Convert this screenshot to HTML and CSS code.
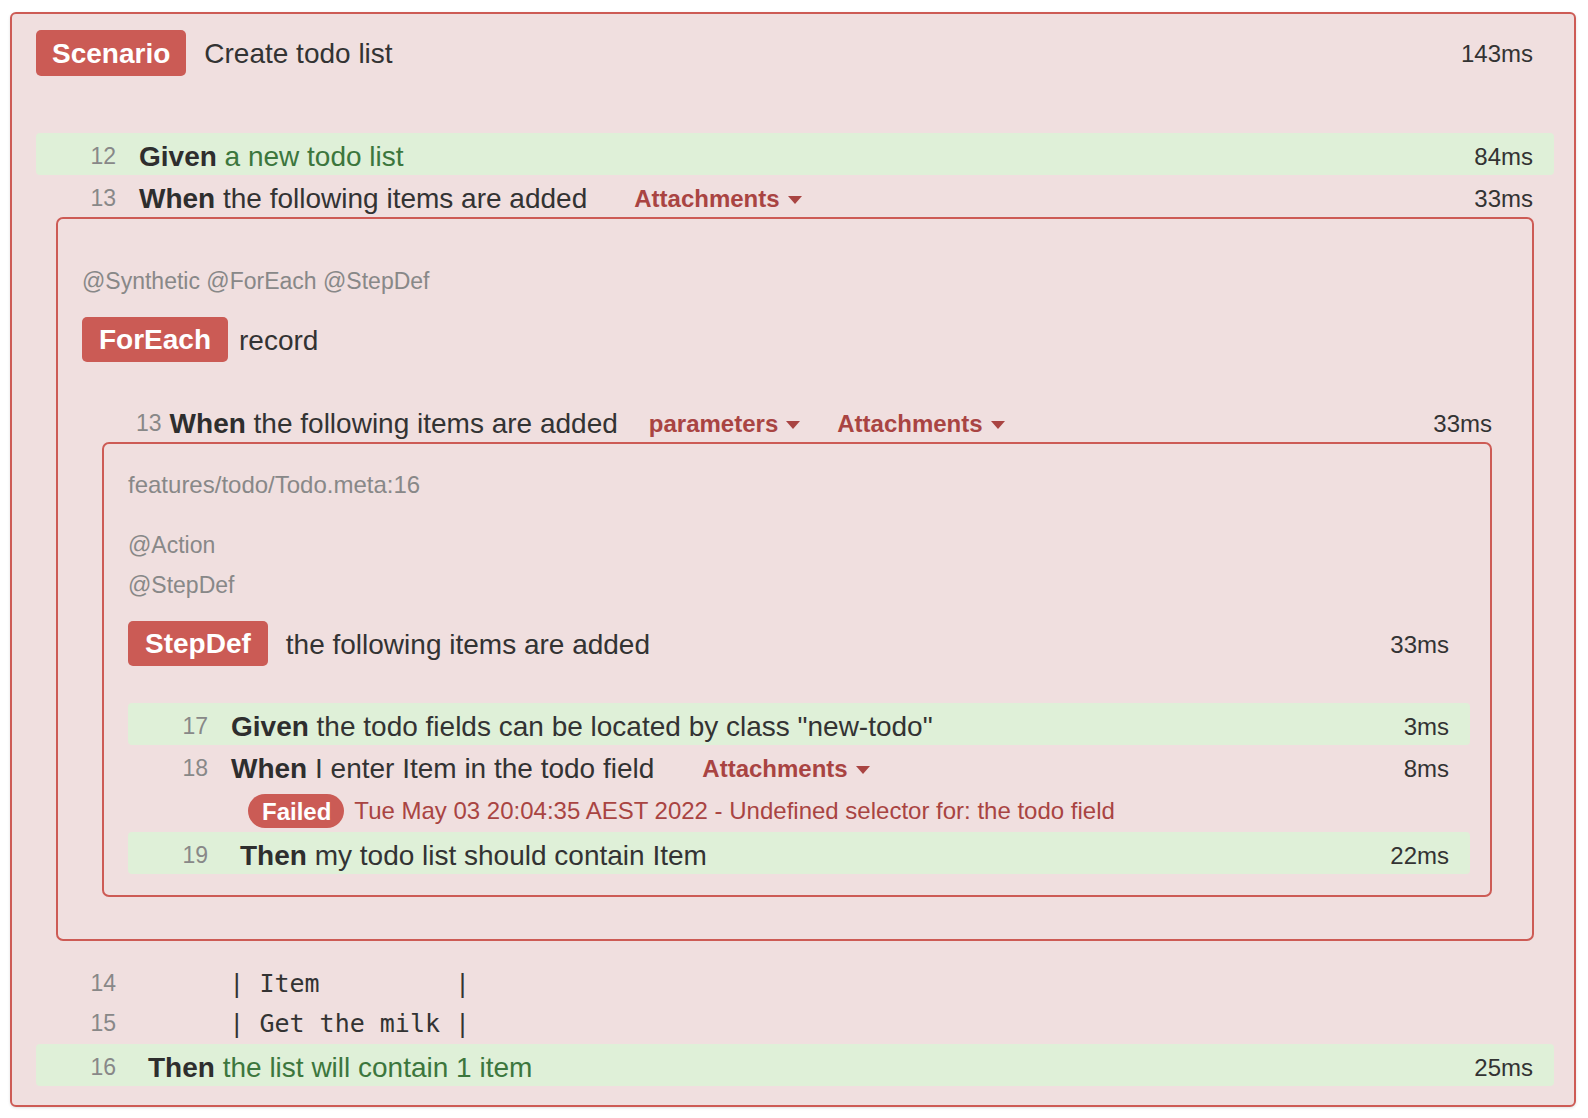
FILE: index.html
```html
<!DOCTYPE html>
<html>
<head>
<meta charset="utf-8">
<link rel="stylesheet" href="styles.css">
</head>
<body>
<div class="page">
  <div class="scenario">
    <div class="head">
      <span class="badge big">Scenario</span>
      <span class="title">Create todo list</span>
      <span class="time">143ms</span>
    </div>
    <div class="steps">
      <div class="step ok"><span class="ln">12</span><span class="txt"><b class="kw">Given</b> <span class="green">a new todo list</span></span><span class="time">84ms</span></div>
      <div class="step"><span class="ln">13</span><span class="txt"><b class="kw">When</b> the following items are added</span><span class="drop">Attachments</span><span class="time">33ms</span></div>
      <div class="box box-outer">
        <div class="tags">@Synthetic @ForEach @StepDef</div>
        <div class="bhead"><span class="badge">ForEach</span><span class="name near">record</span></div>
        <div class="step child"><span class="ln inl">13</span><span class="txt"><b class="kw">When</b> the following items are added</span><span class="drop near">parameters</span><span class="drop next">Attachments</span><span class="time">33ms</span></div>
        <div class="box box-inner">
          <div class="path">features/todo/Todo.meta:16</div>
          <div class="tag tag-first">@Action</div>
          <div class="tag">@StepDef</div>
          <div class="bhead bhead-step"><span class="badge">StepDef</span><span class="name">the following items are added</span><span class="time">33ms</span></div>
          <div class="step ok first"><span class="ln">17</span><span class="txt"><b class="kw">Given</b> the todo fields can be located by class "new-todo"</span><span class="time">3ms</span></div>
          <div class="step"><span class="ln">18</span><span class="txt"><b class="kw">When</b> I enter Item in the todo field</span><span class="drop wide">Attachments</span><span class="time">8ms</span></div>
          <div class="fail"><span class="pill">Failed</span><span class="err">Tue May 03 20:04:35 AEST 2022 - Undefined selector for: the todo field</span></div>
          <div class="step ok"><span class="ln">19</span><span class="txt"><b class="kw shift">Then</b> my todo list should contain Item</span><span class="time">22ms</span></div>
        </div>
      </div>
      <div class="step table first-table"><span class="ln">14</span><span class="mono">      | Item         |</span></div>
      <div class="step table"><span class="ln">15</span><span class="mono">      | Get the milk |</span></div>
      <div class="step ok"><span class="ln">16</span><span class="txt"><b class="kw shift">Then</b> <span class="green">the list will contain 1 item</span></span><span class="time">25ms</span></div>
    </div>
  </div>
</div>
</body>
</html>
```

FILE: styles.css
```css
* {
  box-sizing: border-box;
}

html,
body {
  margin: 0;
  background: #ffffff;
}

body {
  font-family: "Liberation Sans", Arial, Helvetica, sans-serif;
  color: #333333;
}

.page {
  padding: 12px 12px 11px 10px;
}

.scenario {
  border: 2px solid #cd5b55;
  border-radius: 6px;
  background: #f0dfdf;
  padding: 16px 20px 19px 24px;
  box-shadow: 0 1px 3px rgba(0, 0, 0, 0.12);
}

.head {
  display: flex;
  align-items: center;
  height: 46px;
  padding-right: 21px;
  padding-top: 2px;
}

.badge {
  display: inline-block;
  flex: none;
  align-self: flex-start;
  background: #cb5b55;
  color: #ffffff;
  font-weight: bold;
  font-size: 28px;
  border-radius: 5px;
  padding: 0 17px;
  height: 45px;
  line-height: 46px;
}

.head .badge {
  margin-top: -2px;
}

.badge.big {
  height: 46px;
  line-height: 47px;
  padding: 0 16px;
}

.title {
  font-size: 28px;
  margin-left: 18px;
}

.time {
  margin-left: auto;
  font-size: 24px;
  color: #333333;
}

.steps {
  margin-top: 57px;
}

.step {
  display: flex;
  align-items: center;
  height: 42px;
  padding: 5px 21px 0 52px;
  font-size: 28px;
  border-radius: 4px;
}

.step.ok {
  background: #dff0d8;
}

.txt {
  white-space: pre;
}

.ln {
  flex: none;
  width: 28px;
  margin-right: 23px;
  text-align: right;
  font-size: 23px;
  color: #888888;
}

.ln.inl {
  width: auto;
  margin-right: 8px;
}

.kw {
  font-weight: bold;
  color: #2e2e2e;
}

.kw.shift {
  margin-left: 9px;
}

.green {
  color: #3c763d;
}

.drop {
  display: inline-flex;
  align-items: center;
  margin-left: 47px;
  color: #a94442;
  font-weight: bold;
  font-size: 24px;
}

.drop.wide {
  margin-left: 48px;
}

.drop.near {
  margin-left: 31px;
}

.drop.next {
  margin-left: 37px;
}

.drop::after {
  content: "";
  margin-left: 8px;
  margin-top: 2px;
  border-left: 7px solid transparent;
  border-right: 7px solid transparent;
  border-top: 8px solid currentColor;
}

.box {
  margin: 0 20px;
  border: 2px solid #cd5b55;
  border-radius: 7px;
}

.box-outer {
  padding: 0 20px 42px 24px;
}

.box-inner {
  padding: 0 20px 21px 24px;
}

.tags {
  margin-top: 45px;
  font-size: 23px;
  line-height: 34px;
  color: #888888;
}

.bhead {
  display: flex;
  align-items: center;
  height: 45px;
  margin-top: 19px;
  padding-top: 2px;
}

.bhead .badge {
  margin-top: -2px;
}

.bhead-step {
  margin-top: 16px;
  padding-right: 21px;
}

.name {
  font-size: 28px;
  margin-left: 18px;
}

.name.near {
  margin-left: 11px;
}

.step.child {
  margin-top: 38px;
  padding-left: 54px;
  padding-right: 20px;
}

.path {
  margin-top: 24px;
  font-size: 24px;
  line-height: 34px;
  color: #888888;
}

.tag {
  font-size: 23px;
  line-height: 40px;
  color: #888888;
}

.tag-first {
  margin-top: 23px;
}

.step.first {
  margin-top: 37px;
}

.fail {
  display: flex;
  align-items: center;
  height: 45px;
  padding-left: 120px;
  padding-top: 2px;
}

.pill {
  flex: none;
  background: #cb5b55;
  color: #ffffff;
  font-weight: bold;
  font-size: 24px;
  height: 34px;
  line-height: 36px;
  padding: 0 13px 0 14px;
  border-radius: 17px;
}

.err {
  margin-left: 10px;
  font-size: 24px;
  color: #a94442;
}

.step.table {
  height: 40.5px;
  padding-top: 0;
}

.step.first-table {
  margin-top: 22px;
}

.mono {
  font-family: "DejaVu Sans Mono", "Liberation Mono", monospace;
  font-size: 25px;
  white-space: pre;
  color: #333333;
}
```
